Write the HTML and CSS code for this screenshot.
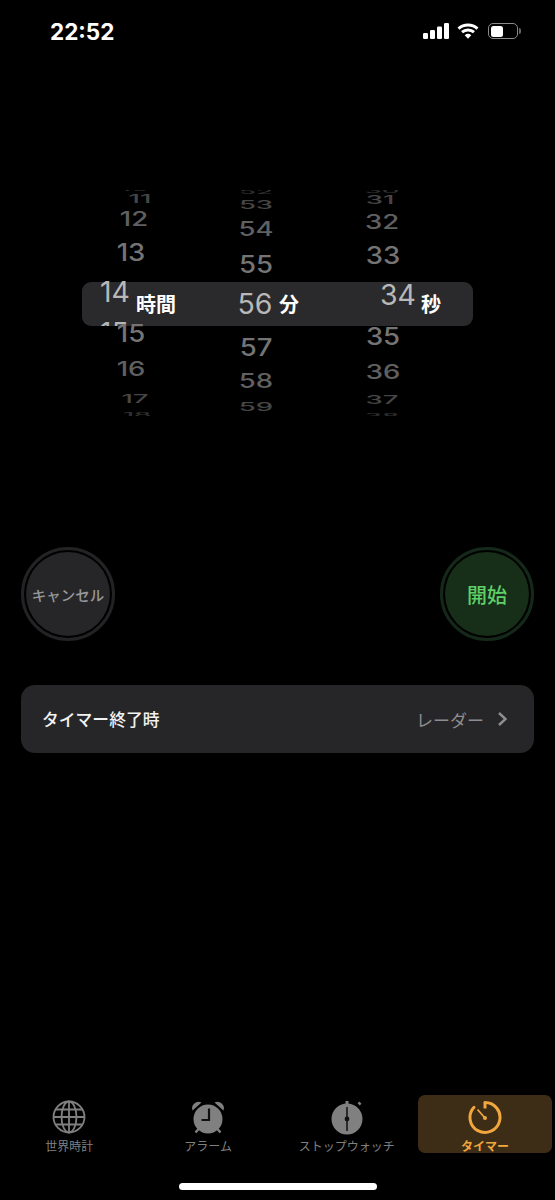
FILE: index.html
```html
<!DOCTYPE html>
<html lang="ja">
<head>
<meta charset="utf-8">
<title>タイマー</title>
<link rel="stylesheet" href="styles.css">
</head>
<body>
<div class="phone">
  <header class="status">
    <span class="clock">22:52</span>
    <div class="status-icons">
      <svg class="signal" width="26" height="16" viewBox="0 0 26 16"><rect x="0" y="10" width="5" height="6" rx="1.2"/><rect x="7" y="7" width="5" height="9" rx="1.2"/><rect x="14" y="3.5" width="5" height="12.5" rx="1.2"/><rect x="21" y="0" width="5" height="16" rx="1.2"/></svg>
      <svg class="wifi" width="22" height="16" viewBox="0 0 22 16"><path d="M1.5 5.6a14 14 0 0 1 19 0" /><path d="M5 9.2a9 9 0 0 1 12 0"/><path class="wifi-dot" d="M11 15.8l-3.3-3.6a5 5 0 0 1 6.600 0z"/></svg>
      <div class="battery"><div class="battery-level"></div></div>
      <div class="battery-cap"></div>
    </div>
  </header>

  <section class="wheel">
    <div class="bar">
      <span class="ghost">15</span>
      <span class="unit unit-h">時間</span>
      <span class="unit unit-m">分</span>
      <span class="unit unit-s">秒</span>
    </div>
    <div class="col col-h">
      <div class="n d4 st-2">10</div>
      <div class="n d3 st10 x6">11</div>
      <div class="n d2 st21">12</div>
      <div class="n d1 st33 xm3">13</div>
      <div class="n d0 st40 xm19">14</div>
      <div class="n d1 st41 xm3">15</div>
      <div class="n d2 st36 xm3">16</div>
      <div class="n d3 st29 x1">17</div>
      <div class="n d4 st16 x3">18</div>
    </div>
    <div class="col col-m">
      <div class="n d4 st0">52</div>
      <div class="n d3 st13">53</div>
      <div class="n d2 st25">54</div>
      <div class="n d1 st35">55</div>
      <div class="n d0 st41 xm1">56</div>
      <div class="n d1 st42">57</div>
      <div class="n d2 st34">58</div>
      <div class="n d3 st25">59</div>
    </div>
    <div class="col col-s">
      <div class="n d4 st0">30</div>
      <div class="n d3 st9 xm2">31</div>
      <div class="n d2 st23">32</div>
      <div class="n d1 st33 x1">33</div>
      <div class="n d0 st40 x16">34</div>
      <div class="n d1 st41 x1">35</div>
      <div class="n d2 st36 x1">36</div>
      <div class="n d3 st27">37</div>
      <div class="n d4 st16">38</div>
    </div>
  </section>

  <section class="actions">
    <div class="ring ring-gray"><button class="btn btn-gray">キャンセル</button></div>
    <div class="ring ring-green"><button class="btn btn-green">開始</button></div>
  </section>

  <section class="card">
    <span class="card-label">タイマー終了時</span>
    <span class="card-value">レーダー</span>
    <svg class="chev" width="11" height="16" viewBox="0 0 11 16"><path d="M2 2l6.500 6-6.500 6"/></svg>
  </section>

  <nav class="tabs">
    <div class="tab">
      <svg class="tab-icon" width="36" height="36" viewBox="0 0 36 36"><g class="line"><circle cx="18" cy="18" r="15.500"/><ellipse cx="18" cy="18" rx="7.500" ry="15.500"/><path d="M18 2.500v31M2.500 18h31M4.500 10.500h27M4.500 25.500h27"/></g></svg>
      <span class="tab-label">世界時計</span>
    </div>
    <div class="tab">
      <svg class="tab-icon" width="36" height="36" viewBox="0 0 36 36"><g class="fill"><circle cx="18" cy="20" r="14.500"/><path d="M2.500 11.500a6.500 6.500 0 0 1 9-8z"/><path d="M33.500 11.500a6.500 6.500 0 0 0-9-8z"/></g><path class="feet" d="M8.500 30l-3 3.500M27.500 30l3 3.500"/><path class="hand" d="M19 9.500V21h-7.500"/></svg>
      <span class="tab-label">アラーム</span>
    </div>
    <div class="tab">
      <svg class="tab-icon" width="36" height="36" viewBox="0 0 36 36"><g class="fill"><circle cx="18" cy="20" r="15.500"/><rect x="16.500" y="2" width="3" height="4"/><rect x="29.300" y="3" width="2.500" height="3" transform="rotate(-45 30.500 4.500)"/></g><path class="hand thin" d="M18 8v24"/><circle class="pin" cx="18" cy="20" r="2.400"/></svg>
      <span class="tab-label">ストップウォッチ</span>
    </div>
    <div class="tab tab-on">
      <svg class="tab-icon" width="36" height="36" viewBox="0 0 36 36"><path class="timer" d="M18 3.500a15 15 0 1 1-11 4.800"/><path class="timer-stem" d="M18 3.500v6"/><path class="timer-hand" d="M10.500 10.500L18 19"/><circle class="timer-pin" cx="18" cy="19" r="2"/></svg>
      <span class="tab-label">タイマー</span>
    </div>
  </nav>
  <div class="home"></div>
</div>
</body>
</html>
```

FILE: styles.css
```css
* { box-sizing: border-box; }
html, body { margin: 0; background: #000; }
body { font-family: "Noto Sans CJK JP", "Noto Sans", sans-serif; color: #fff; overflow: hidden; }
.phone { width: 555px; height: 1200px; display: flex; flex-direction: column; overflow: hidden; }

/* status bar */
.status { height: 62px; flex: none; display: flex; justify-content: space-between; padding: 21px 34px 0 50px; }
.clock { font: 700 22.500px/21px Inter, "Liberation Sans", sans-serif; }
.status-icons { display: flex; align-items: flex-start; padding-top: 2px; }
.signal { fill: #fff; }
.wifi { margin-left: 8px; fill: none; stroke: #fff; stroke-width: 3; }
.wifi-dot { fill: #fff; stroke: none; }
.battery { width: 30px; height: 16px; margin-left: 9px; border: 1.500px solid #8a8a8a; border-radius: 5px; padding: 1.500px; }
.battery-level { width: 12px; height: 100%; background: #fff; border-radius: 2.500px; }
.battery-cap { width: 2px; height: 6px; margin: 5px 0 0 1px; background: #666; border-radius: 0 2px 2px 0; }

/* picker wheel */
.wheel { position: relative; flex: none; height: 226px; margin-top: 128px; display: flex; padding-left: 84px; overflow: hidden; }
.bar { position: absolute; left: 82px; top: 92px; width: 391px; height: 44px; background: #2a2a2c; border-radius: 9px; overflow: hidden; display: flex; align-items: center; }
.ghost { position: absolute; left: 18px; top: 41px; font: 400 28px/20px Inter, "Liberation Sans", sans-serif; color: #b5b5b5; }
.unit { font-size: 20px; font-weight: 700; line-height: 50px; }
.unit-h { margin-left: 54px; }
.unit-m { margin-left: 103px; }
.unit-s { margin-left: 122px; }

.col { position: relative; width: 100px; flex: none; display: flex; flex-direction: column; align-items: center; padding-top: 1px; font: 500 27.500px/1 Inter, "Liberation Sans", sans-serif; }
.col-m { margin-left: 22px; padding-top: 2px; }
.col-s { margin-left: 26px; }

.n { height: 0; display: flex; align-items: center; justify-content: center; line-height: 1; transform: translate(var(--x, 0), var(--y, 0)) scaleY(var(--sy, 1)); }
.d0 { color: #b8b8b8; font-size: 28.500px; font-weight: 400; --sy: 1; --y: -1px; }
.col-m .d0 { --y: -2px; }
.d1 { color: #747474; --sy: .9; }
.d2 { color: #606060; --sy: .72; }
.d3 { color: #464646; --sy: .44; }
.d4 { color: #303030; --sy: .22; }

.st-2 { margin-top: -2px; } .st0 { margin-top: 0; } .st9 { margin-top: 9px; } .st10 { margin-top: 10px; }
.st13 { margin-top: 13px; } .st16 { margin-top: 16px; } .st21 { margin-top: 21px; } .st23 { margin-top: 23px; }
.st25 { margin-top: 25px; } .st27 { margin-top: 27px; } .st29 { margin-top: 29px; } .st33 { margin-top: 33px; }
.st34 { margin-top: 34px; } .st35 { margin-top: 35px; } .st36 { margin-top: 36px; } .st40 { margin-top: 40px; }
.st41 { margin-top: 41px; } .st42 { margin-top: 42px; }

.x1 { --x: 1px; } .x3 { --x: 3px; } .x6 { --x: 6px; } .x16 { --x: 16px; }
.xm1 { --x: -1px; } .xm2 { --x: -2px; } .xm3 { --x: -3px; } .xm19 { --x: -19px; }

/* buttons */
.actions { flex: none; display: flex; justify-content: space-between; margin-top: 131px; padding: 0 21px; }
.ring { width: 94px; height: 94px; border-radius: 50%; padding: 2px; border: 3px solid; flex: none; }
.ring-gray { border-color: #232325; }
.ring-green { border-color: #15291a; }
.btn { display: block; width: 100%; height: 100%; padding: 0; border: 0; border-radius: 50%; font-family: inherit; white-space: nowrap; }
.btn-gray { background: #262628; color: #98989a; font-size: 14.500px; font-weight: 500; }
.btn-green { background: #172e18; color: #5fd068; font-size: 20px; font-weight: 500; }

/* card */
.card { flex: none; height: 68px; margin: 44px 21px 0; padding: 0 26px 0 21px; background: #262628; border-radius: 14px; display: flex; align-items: center; }
.card-label { font-size: 16.800px; font-weight: 500; color: #f2f2f2; flex: 1; }
.card-value { font-size: 17px; color: #8e8e90; }
.chev { margin-left: 13px; fill: none; stroke: #8e8e90; stroke-width: 2.400; }

/* tabs */
.tabs { flex: none; margin-top: auto; display: grid; grid-template-columns: repeat(4, 138.750px); height: 58px; }
.tab { display: flex; flex-direction: column; align-items: center; height: 58px; color: #808080; }
.tab-icon { flex: none; margin-top: 4px; }
.tab-label { font-size: 12px; line-height: 16px; margin-top: 3px; white-space: nowrap; }
.tab-on { margin: 0 3px 0 2px; background: #3d2c16; border-radius: 7px; color: #f0a73d; font-weight: 700; }
.line { fill: none; stroke: #808080; stroke-width: 1.800; }
.fill { fill: #808080; }
.feet { fill: none; stroke: #808080; stroke-width: 2.500; }
.hand { fill: none; stroke: #111; stroke-width: 2.200; }
.thin { stroke-width: 1.500; }
.pin { fill: #111; }
.timer { fill: none; stroke: #f0a73d; stroke-width: 3; stroke-linecap: round; }
.timer-stem { fill: none; stroke: #f0a73d; stroke-width: 3; }
.timer-hand { fill: none; stroke: #f0a73d; stroke-width: 1.800; }
.timer-pin { fill: #f0a73d; }

/* home indicator */
.home { flex: none; width: 198px; height: 7px; margin: 30px auto 10px; background: #fff; border-radius: 4px; }
```
